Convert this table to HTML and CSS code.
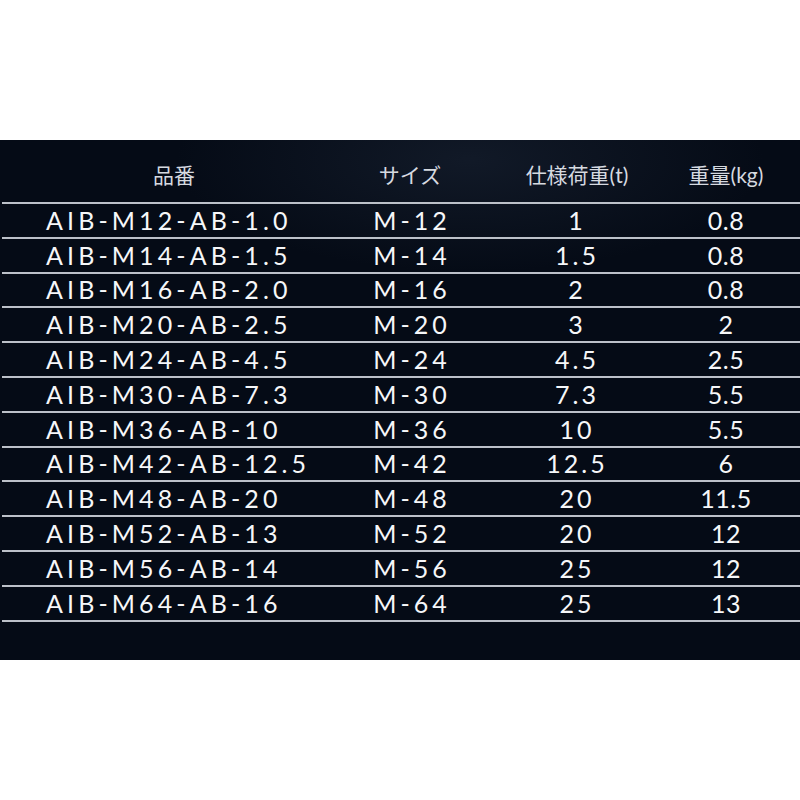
FILE: index.html
```html
<!DOCTYPE html>
<html lang="ja">
<head>
<meta charset="utf-8">
<link rel="stylesheet" href="styles.css">
</head>
<body>
<div class="panel">
  <div class="table">
    <div class="row head">
      <div class="c1">品番</div>
      <div class="c2">サイズ</div>
      <div class="c3">仕様荷重(t)</div>
      <div class="c4">重量(kg)</div>
    </div>
    <div class="row"><div class="c1">AIB-M12-AB-1.0</div><div class="c2">M-12</div><div class="c3">1</div><div class="c4">0.8</div></div>
    <div class="row"><div class="c1">AIB-M14-AB-1.5</div><div class="c2">M-14</div><div class="c3">1.5</div><div class="c4">0.8</div></div>
    <div class="row"><div class="c1">AIB-M16-AB-2.0</div><div class="c2">M-16</div><div class="c3">2</div><div class="c4">0.8</div></div>
    <div class="row"><div class="c1">AIB-M20-AB-2.5</div><div class="c2">M-20</div><div class="c3">3</div><div class="c4">2</div></div>
    <div class="row"><div class="c1">AIB-M24-AB-4.5</div><div class="c2">M-24</div><div class="c3">4.5</div><div class="c4">2.5</div></div>
    <div class="row"><div class="c1">AIB-M30-AB-7.3</div><div class="c2">M-30</div><div class="c3">7.3</div><div class="c4">5.5</div></div>
    <div class="row"><div class="c1">AIB-M36-AB-10</div><div class="c2">M-36</div><div class="c3">10</div><div class="c4">5.5</div></div>
    <div class="row"><div class="c1">AIB-M42-AB-12.5</div><div class="c2">M-42</div><div class="c3">12.5</div><div class="c4">6</div></div>
    <div class="row"><div class="c1">AIB-M48-AB-20</div><div class="c2">M-48</div><div class="c3">20</div><div class="c4">11.5</div></div>
    <div class="row"><div class="c1">AIB-M52-AB-13</div><div class="c2">M-52</div><div class="c3">20</div><div class="c4">12</div></div>
    <div class="row"><div class="c1">AIB-M56-AB-14</div><div class="c2">M-56</div><div class="c3">25</div><div class="c4">12</div></div>
    <div class="row"><div class="c1">AIB-M64-AB-16</div><div class="c2">M-64</div><div class="c3">25</div><div class="c4">13</div></div>
  </div>
</div>
</body>
</html>
```

FILE: styles.css
```css
html, body {
  margin: 0;
  padding: 0;
  background: #ffffff;
}
body {
  width: 800px;
  height: 800px;
  overflow: hidden;
}
.panel {
  margin-top: 140px;
  height: 520px;
  background:
    radial-gradient(ellipse 420px 160px at 470px 20px, rgba(40,52,72,0.35), rgba(40,52,72,0) 70%),
    #050b16;
  padding-left: 2px;
  box-sizing: border-box;
}
.row {
  display: grid;
  grid-template-columns: 344px 128px 206px 92px;
  height: 32.8px;
  border-bottom: 2px solid #bcc1c9;
  align-items: center;
  color: #f6f7f9;
  font-family: Lato, "Noto Sans CJK JP", sans-serif;
  font-weight: 400;
  font-size: 25px;
  line-height: 1;
}
.row > div {
  text-align: center;
  white-space: nowrap;
}
.row .c1 {
  text-align: left;
  padding-left: 44px;
  letter-spacing: 4.1px;
}
.row .c2 {
  letter-spacing: 4px;
  padding-left: 4px;
}
.row .c3 {
  letter-spacing: 3px;
}
.row .c4 {
  letter-spacing: 0.5px;
}
.row.head {
  height: 64px;
  padding-top: 6px;
  box-sizing: border-box;
  font-family: Lato, "Noto Sans CJK JP", sans-serif;
  font-weight: 400;
  font-size: 21px;
  color: #d6dae0;
}
.row.head > div {
  text-align: center;
  padding-left: 0;
  letter-spacing: 0;
}
```
